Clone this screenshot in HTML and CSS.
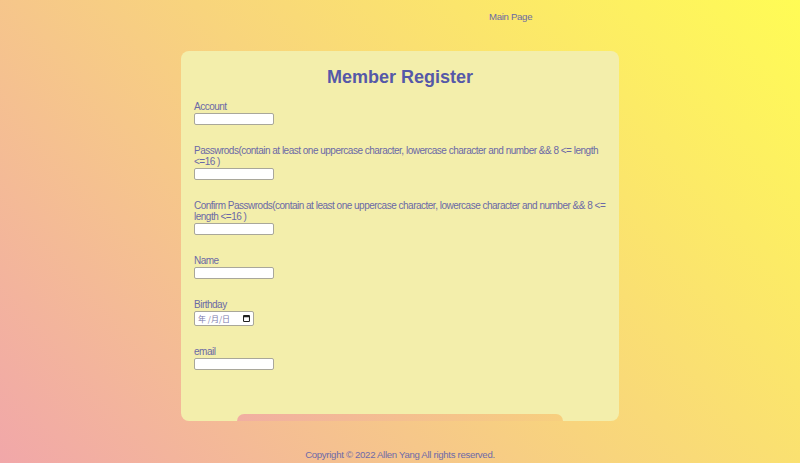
FILE: index.html
```html
<!DOCTYPE html>
<html lang="zh">
<head>
<meta charset="utf-8">
<title>Member Register</title>
<link rel="stylesheet" href="styles.css">
</head>
<body>
<nav class="nav"><a class="nav-link">Main Page</a></nav>
<main class="card">
  <h1 class="title">Member Register</h1>
  <div class="field">
    <label class="label">Account</label>
    <input class="input" type="text">
  </div>
  <div class="field">
    <label class="label">Passwrods(contain at least one uppercase character, lowercase character and number &amp;&amp; 8 &lt;= length &lt;=16 )</label>
    <input class="input" type="password">
  </div>
  <div class="field">
    <label class="label">Confirm Passwrods(contain at least one uppercase character, lowercase character and number &amp;&amp; 8 &lt;= length &lt;=16 )</label>
    <input class="input" type="password">
  </div>
  <div class="field">
    <label class="label">Name</label>
    <input class="input" type="text">
  </div>
  <div class="field">
    <label class="label">Birthday</label>
    <div class="date">
      <span class="date-text">年 /月/日</span>
      <svg class="cal" width="7" height="7" viewBox="0 0 8 8"><rect x="0.6" y="0.6" width="6.8" height="6.8" rx="0.8" fill="none" stroke="#222" stroke-width="1.2"/><rect x="0.6" y="0.6" width="6.8" height="2" fill="#222"/></svg>
    </div>
  </div>
  <div class="field">
    <label class="label">email</label>
    <input class="input" type="email">
  </div>
  <div class="submit"></div>
</main>
<footer class="footer">Copyright © 2022 Allen Yang All rights reserved.</footer>
</body>
</html>
```
FILE: styles.css
```css
html, body {
  margin: 0;
  height: 463px;
}
body {
  font-family: "Liberation Sans", Arial, "Noto Sans CJK SC", sans-serif;
  background: linear-gradient(48deg, #f1a7a9 0%, #f8d47d 50%, #fffc55 100%);
  overflow: hidden;
}
.nav {
  padding: 8px 0 0 489px;
  height: 13px;
  line-height: 13px;
}
.nav-link {
  font-size: 9.6px;
  letter-spacing: -0.3px;
  color: #6b69a4;
}
.card {
  width: 438px;
  margin: 30px auto 0;
  box-sizing: border-box;
  padding: 14px 13px 0;
  background: #f3eeab;
  border-radius: 8px;
  height: 370px;
  display: flex;
  flex-direction: column;
}
.title {
  margin: 0 0 12px;
  font-size: 18px;
  line-height: 24px;
  font-weight: bold;
  text-align: center;
  color: #5558a8;
}
.field {
  display: flex;
  flex-direction: column;
  align-items: flex-start;
  margin-bottom: 20px;
}
.label {
  font-size: 10px;
  letter-spacing: -0.5px;
  line-height: 11px;
  color: #6b69a6;
  margin-bottom: 1px;
}
.input {
  width: 80px;
  height: 12px;
  box-sizing: border-box;
  margin: 0;
  padding: 0;
  border: 1px solid #a9a79a;
  border-radius: 2px;
  background: #fff;
}
.date {
  width: 60px;
  height: 15px;
  box-sizing: border-box;
  border: 1px solid #a9a79a;
  border-radius: 2px;
  background: #fff;
  display: flex;
  align-items: center;
  justify-content: space-between;
  padding: 0 3px 0 3px;
}
.date-text {
  font-family: "Noto Sans CJK SC", sans-serif;
  font-size: 8px;
  line-height: 10px;
  color: #7b79ac;
}
.cal {
  display: block;
}
.submit {
  margin: auto 43px 0 43px;
  height: 7px;
  border-radius: 8px 8px 0 0;
  background: linear-gradient(to right, #f1aea2, #f7cf7e);
}
.footer {
  margin-top: 28px;
  text-align: center;
  font-size: 9.6px;
  letter-spacing: -0.3px;
  line-height: 12px;
  color: #6e6aa8;
}
```
